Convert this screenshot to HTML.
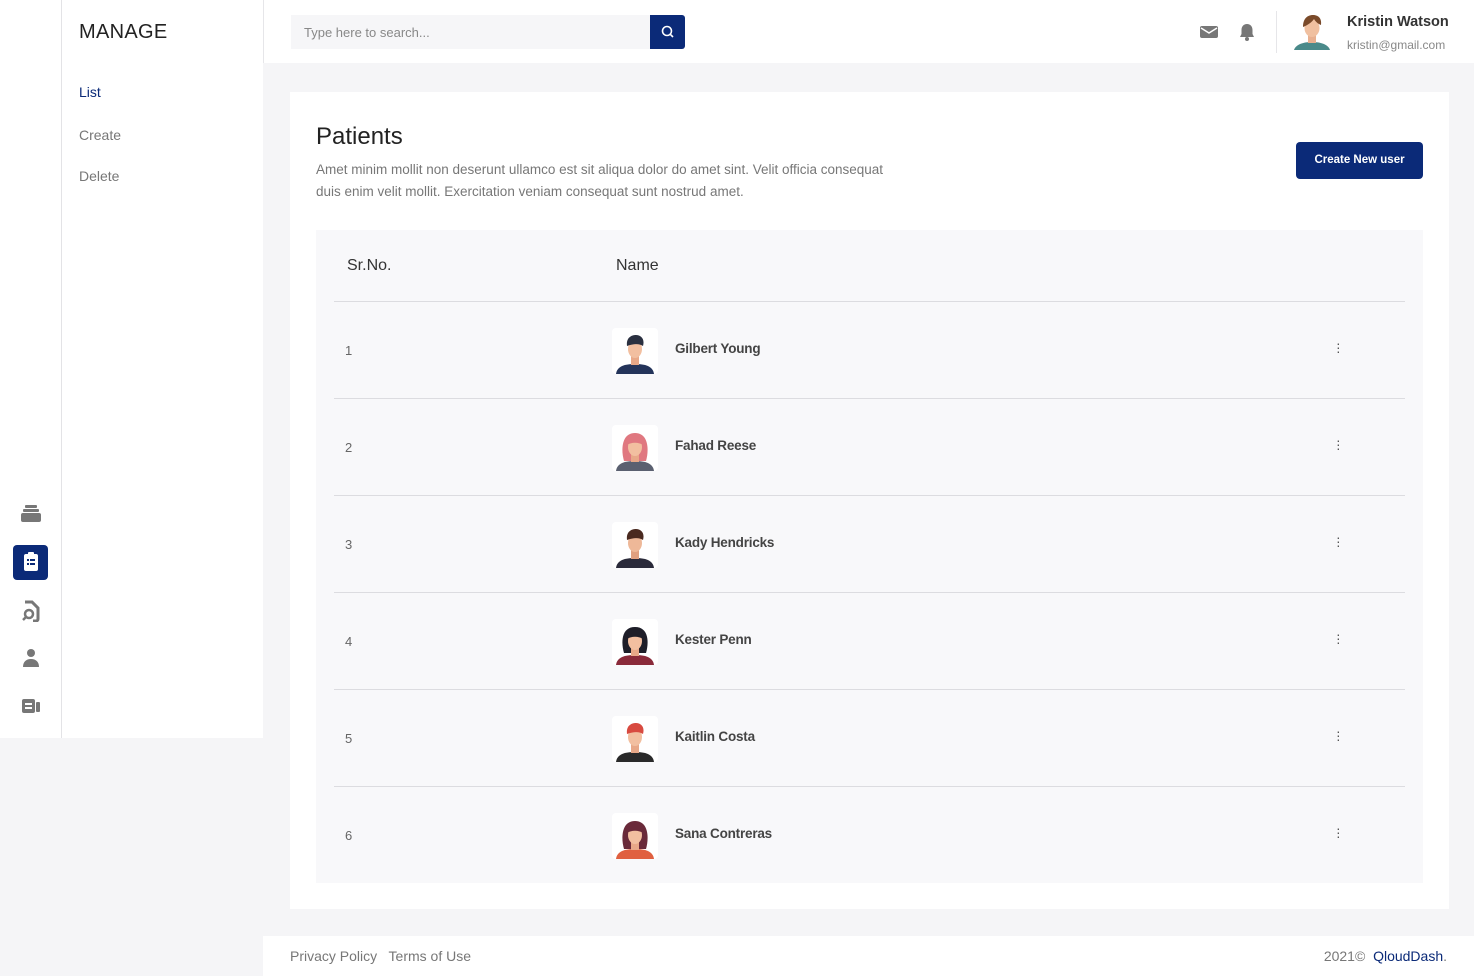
<!DOCTYPE html>
<html><head><meta charset="utf-8"><style>
*{margin:0;padding:0;box-sizing:border-box}
body{width:1474px;height:976px;background:#f5f5f7;font-family:"Liberation Sans",sans-serif;position:relative;overflow:hidden;color:#333}
.rail{position:absolute;left:0;top:0;width:62px;height:738px;background:#fff;border-right:1px solid #e3e3e6}
.sub{position:absolute;left:62px;top:0;width:201px;height:738px;background:#fff}
.sub h1{position:absolute;left:17px;top:21px;font-size:20px;font-weight:normal;color:#222;letter-spacing:.3px}
.sub a{position:absolute;left:17px;font-size:14px;color:#777}
.header{position:absolute;left:263px;top:0;width:1211px;height:63px;background:#fff;border-left:1px solid #e6e6e9}
.search{position:absolute;left:27px;top:15px;width:360px;height:34px;background:#f6f6f8}
.search span{position:absolute;left:13px;top:10px;font-size:13px;color:#888}
.sbtn{position:absolute;left:386px;top:15px;width:35px;height:34px;background:#0b2a78;border-radius:0 3px 3px 0}
.card{position:absolute;left:290px;top:92px;width:1159px;height:817px;background:#fff}
.tbl{position:absolute;left:26px;top:138px;width:1107px;height:653px;background:#f8f8fa}
.row{position:absolute;left:18px;width:1071px;height:97px;border-top:1px solid #dcdce0}
.num{position:absolute;left:11px;top:41px;font-size:13px;color:#666}
.av{position:absolute;left:278px;top:26px;width:46px;height:46px;background:#fff;border-radius:4px;overflow:hidden}
.nm{position:absolute;left:341px;top:39px;font-size:13.5px;color:#444;font-weight:bold;letter-spacing:-.2px}
.dots{position:absolute;left:1002px;top:39px;width:4px;font-size:14px;color:#555;line-height:4px}
.footer{position:absolute;left:263px;top:936px;width:1211px;height:40px;background:#fff}
.ic{position:absolute;left:20px}
</style></head><body>
<div class="rail">
 <svg class="ic" style="top:503px" width="22" height="20" viewBox="0 0 22 20"><rect x="5" y="2" width="12" height="3" rx="1" fill="#777"/><rect x="3" y="6" width="16" height="3" rx="1" fill="#777"/><rect x="1" y="10" width="20" height="9" rx="2" fill="#777"/></svg>
 <div style="position:absolute;left:13px;top:545px;width:35px;height:35px;background:#0b2a78;border-radius:4px"></div>
 <svg class="ic" style="top:551px;left:22px" width="18" height="22" viewBox="0 0 18 22"><rect x="2" y="3" width="14" height="17" rx="2" fill="#fff"/><rect x="6" y="1" width="6" height="4" rx="1" fill="#fff"/><rect x="5" y="8" width="2" height="2" fill="#0b2a78"/><rect x="8" y="8" width="5" height="2" fill="#0b2a78"/><rect x="5" y="12" width="2" height="2" fill="#0b2a78"/><rect x="8" y="12" width="5" height="2" fill="#0b2a78"/></svg>
 <svg class="ic" style="top:600px;left:21px" width="20" height="22" viewBox="0 0 20 22"><path d="M4 2h7l6 6v11a2 2 0 0 1-2 2h-3" fill="none" stroke="#777" stroke-width="3"/><circle cx="8" cy="14" r="4" fill="none" stroke="#777" stroke-width="2.5"/><path d="M5 17l-3 3" stroke="#777" stroke-width="2.5"/></svg>
 <svg class="ic" style="top:648px;left:22px" width="18" height="20" viewBox="0 0 18 20"><circle cx="9" cy="5" r="4" fill="#777"/><path d="M1 19c0-5 3-8 8-8s8 3 8 8z" fill="#777"/></svg>
 <svg class="ic" style="top:697px;left:21px" width="20" height="18" viewBox="0 0 20 18"><rect x="1" y="2" width="13" height="14" rx="2" fill="#777"/><rect x="4" y="6" width="7" height="2" fill="#fff"/><rect x="4" y="10" width="7" height="2" fill="#fff"/><rect x="15" y="5" width="4" height="10" rx="1" fill="#777"/></svg>
</div>
<div class="sub">
 <h1>MANAGE</h1>
 <a style="top:84px;color:#0b2a78">List</a>
 <a style="top:127px">Create</a>
 <a style="top:168px">Delete</a>
</div>
<div class="header">
 <div class="search"><span>Type here to search...</span></div>
 <div class="sbtn"><svg width="35" height="34" viewBox="0 0 35 34"><circle cx="17" cy="16" r="4.5" fill="none" stroke="#fff" stroke-width="1.6"/><path d="M20.3 19.3l2.7 2.7" stroke="#fff" stroke-width="1.6"/></svg></div>
 <svg style="position:absolute;left:936px;top:25px" width="18" height="14" viewBox="0 0 18 14"><rect x="0" y="1" width="18" height="12" rx="2" fill="#777"/><path d="M1 3l8 5 8-5" fill="none" stroke="#fff" stroke-width="1.5"/></svg>
 <svg style="position:absolute;left:975px;top:23px" width="16" height="19" viewBox="0 0 16 19"><path d="M8 1c-3.5 0-5.5 2.5-5.5 6v4L1 14h14l-1.5-3V7C13.5 3.5 11.5 1 8 1z" fill="#777"/><circle cx="8" cy="16" r="2" fill="#777"/></svg>
 <div style="position:absolute;left:1012px;top:11px;width:1px;height:42px;background:#e6e6e9"></div>
 <svg style="position:absolute;left:1028px;top:12px" width="40" height="40" viewBox="0 0 40 40"><path d="M2 38c2-6 10-8 18-8s16 2 18 8z" fill="#4a8a8a"/><rect x="16" y="23" width="8" height="8" fill="#e8b090"/><ellipse cx="20" cy="16" rx="7.5" ry="9" fill="#f0c0a0"/><path d="M11 15c0-9 5-12 10-12s9 3 8 10c-3-1-6-4-7-6-2 3-6 6-11 8z" fill="#7a4a2a"/></svg>
 <div style="position:absolute;left:1083px;top:14px;font-size:14.5px;font-weight:bold;color:#333">Kristin Watson</div>
 <div style="position:absolute;left:1083px;top:38px;font-size:12px;color:#888">kristin@gmail.com</div>
</div>
<div class="card">
 <div style="position:absolute;left:26px;top:31px;font-size:24px;color:#222">Patients</div>
 <div style="position:absolute;left:26px;top:67px;width:585px;font-size:13.5px;line-height:22px;color:#777">Amet minim mollit non deserunt ullamco est sit aliqua dolor do amet sint. Velit officia consequat duis enim velit mollit. Exercitation veniam consequat sunt nostrud amet.</div>
 <div style="position:absolute;left:1006px;top:50px;width:127px;height:37px;background:#0b2a78;border-radius:4px;color:#fff;font-size:11.5px;font-weight:bold;text-align:center;line-height:37px">Create New user</div>
 <div class="tbl">
  <div style="position:absolute;left:31px;top:27px;font-size:16px;color:#333">Sr.No.</div>
  <div style="position:absolute;left:300px;top:27px;font-size:16px;color:#333">Name</div>
  <div class="row" style="top:71px"><span class="num">1</span><div class="av"><svg width="46" height="46" viewBox="0 0 46 46"><path d="M4 46c1-8 9-10 19-10s18 2 19 10z" fill="#24345a"/><rect x="19" y="28" width="8" height="9" fill="#e8a888"/><ellipse cx="23" cy="21" rx="7" ry="9" fill="#f2bfa0"/><path d="M15 18c-1-8 4-11 9-11s9 4 7 11c-3-2-8-3-16 0z" fill="#2a3040"/></svg></div><span class="nm">Gilbert Young</span><div class="dots">·<br>·<br>·</div></div>
  <div class="row" style="top:168px"><span class="num">2</span><div class="av"><svg width="46" height="46" viewBox="0 0 46 46"><path d="M12 36c-3-10-3-28 11-28s14 18 11 28z" fill="#e07880"/><path d="M4 46c1-8 9-10 19-10s18 2 19 10z" fill="#5a6070"/><rect x="19" y="28" width="8" height="9" fill="#e8a888"/><ellipse cx="23" cy="22" rx="7" ry="9" fill="#f2bfa0"/><path d="M15 20c0-7 4-10 8-10s8 3 8 10c-4-3-12-3-16 0z" fill="#e07880"/></svg></div><span class="nm">Fahad Reese</span><div class="dots">·<br>·<br>·</div></div>
  <div class="row" style="top:265px"><span class="num">3</span><div class="av"><svg width="46" height="46" viewBox="0 0 46 46"><path d="M4 46c1-8 9-10 19-10s18 2 19 10z" fill="#2a2a3a"/><rect x="19" y="28" width="8" height="9" fill="#e0a080"/><ellipse cx="23" cy="21" rx="7" ry="9" fill="#eeb898"/><path d="M15 18c-1-8 4-11 9-11s9 4 7 11c-3-2-8-3-16 0z" fill="#4a2a20"/></svg></div><span class="nm">Kady Hendricks</span><div class="dots">·<br>·<br>·</div></div>
  <div class="row" style="top:362px"><span class="num">4</span><div class="av"><svg width="46" height="46" viewBox="0 0 46 46"><path d="M12 34c-3-10-3-26 11-26s14 16 11 26z" fill="#1e1e28"/><path d="M4 46c1-8 9-10 19-10s18 2 19 10z" fill="#8a2a3a"/><rect x="19" y="28" width="8" height="9" fill="#e8a888"/><ellipse cx="23" cy="22" rx="7" ry="9" fill="#f2bfa0"/><path d="M15 20c0-7 4-10 8-10s8 3 8 10c-4-3-12-3-16 0z" fill="#1e1e28"/></svg></div><span class="nm">Kester Penn</span><div class="dots">·<br>·<br>·</div></div>
  <div class="row" style="top:459px"><span class="num">5</span><div class="av"><svg width="46" height="46" viewBox="0 0 46 46"><path d="M4 46c1-8 9-10 19-10s18 2 19 10z" fill="#2a2a2a"/><rect x="19" y="28" width="8" height="9" fill="#e8a888"/><ellipse cx="23" cy="21" rx="7" ry="9" fill="#f2bfa0"/><path d="M15 18c-1-8 4-11 9-11s9 4 7 11c-3-2-8-3-16 0z" fill="#d84a40"/></svg></div><span class="nm">Kaitlin Costa</span><div class="dots">·<br>·<br>·</div></div>
  <div class="row" style="top:556px"><span class="num">6</span><div class="av"><svg width="46" height="46" viewBox="0 0 46 46"><path d="M12 36c-3-10-3-28 11-28s14 18 11 28z" fill="#6a2a3a"/><path d="M4 46c1-8 9-10 19-10s18 2 19 10z" fill="#e06040"/><rect x="19" y="28" width="8" height="9" fill="#e8a888"/><ellipse cx="23" cy="22" rx="7" ry="9" fill="#f2bfa0"/><path d="M15 20c0-7 4-10 8-10s8 3 8 10c-4-3-12-3-16 0z" fill="#6a2a3a"/></svg></div><span class="nm">Sana Contreras</span><div class="dots">·<br>·<br>·</div></div>
 </div>
</div>
<div class="footer">
 <div style="position:absolute;left:27px;top:12px;font-size:14px;color:#777">Privacy Policy&nbsp;&nbsp; Terms of Use</div>
 <div style="position:absolute;right:27px;top:12px;font-size:14px;color:#777">2021©&nbsp; <span style="color:#0b2a78">QloudDash</span>.</div>
</div>
</body></html>
